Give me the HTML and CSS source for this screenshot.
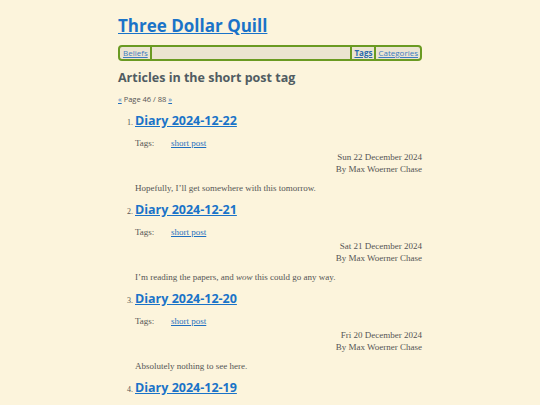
FILE: index.html
```html
<!DOCTYPE html>
<html>
<head>
<meta charset="utf-8">
<link rel="stylesheet" href="styles.css">
</head>
<body>
<div class="page">
  <h1 class="site-title"><a href="#">Three Dollar Quill</a></h1>
  <nav class="nav">
    <a class="nav-item" href="#">Beliefs</a>
    <span class="nav-fill"></span>
    <a class="nav-item nav-current" href="#">Tags</a>
    <a class="nav-item" href="#">Categories</a>
  </nav>
  <h2 class="heading">Articles in the short post tag</h2>
  <p class="pager"><a href="#">«</a> Page 46 / 88 <a href="#">»</a></p>
  <ol class="articles" start="1">
    <li class="article">
      <h3 class="article-title"><a href="#">Diary 2024-12-22</a></h3>
      <div class="tags"><span class="tags-label">Tags:</span><a href="#">short post</a></div>
      <div class="meta">Sun 22 December 2024<br>By Max Woerner Chase</div>
      <p class="summary">Hopefully, I’ll get somewhere with this tomorrow.</p>
    </li>
    <li class="article">
      <h3 class="article-title"><a href="#">Diary 2024-12-21</a></h3>
      <div class="tags"><span class="tags-label">Tags:</span><a href="#">short post</a></div>
      <div class="meta">Sat 21 December 2024<br>By Max Woerner Chase</div>
      <p class="summary">I’m reading the papers, and <em>wow</em> this could go any way.</p>
    </li>
    <li class="article">
      <h3 class="article-title"><a href="#">Diary 2024-12-20</a></h3>
      <div class="tags"><span class="tags-label">Tags:</span><a href="#">short post</a></div>
      <div class="meta">Fri 20 December 2024<br>By Max Woerner Chase</div>
      <p class="summary">Absolutely nothing to see here.</p>
    </li>
    <li class="article">
      <h3 class="article-title"><a href="#">Diary 2024-12-19</a></h3>
    </li>
  </ol>
</div>
</body>
</html>
```
FILE: styles.css
```css
html, body {
  margin: 0;
  padding: 0;
  background: #fcf4dc;
}
body {
  font-family: "Liberation Serif", serif;
  color: #555555;
  font-size: 9px;
}
.page {
  width: 304px;
  margin: 0 auto;
  padding-top: 14px;
}
a {
  color: #1f6fbf;
}
.site-title {
  font-family: "Open Sans", sans-serif;
  font-size: 17px;
  font-weight: 700;
  margin: 0 0 7px 0;
  line-height: 24px;
}
.site-title a {
  color: #1a73c8;
}
.nav {
  display: flex;
  align-items: stretch;
  height: 12px;
  border: 2px solid #6a9a22;
  border-radius: 4px;
  background: #ebe4d1;
  font-family: "Open Sans", sans-serif;
  font-size: 8px;
  line-height: 12px;
}
.nav-item {
  padding: 0 2px;
  color: #3d7bc0;
  border-right: 2px solid #6a9a22;
}
.nav-item:first-child {
  padding-left: 3px;
}
.nav-item:last-child {
  border-right: none;
}
.nav-fill {
  flex: 1;
  border-right: 2px solid #6a9a22;
}
.nav-current {
  font-weight: 700;
  color: #2a69ad;
}
.heading {
  font-family: "Open Sans", sans-serif;
  font-size: 12.5px;
  font-weight: 700;
  color: #505c62;
  margin: 8px 0 0 0;
  line-height: 18px;
}
.pager {
  font-family: "Open Sans", sans-serif;
  font-size: 7.5px;
  color: #555;
  margin: 7px 0 0 0;
  line-height: 10px;
}
.articles {
  margin: 8px 0 0 0;
  padding-left: 17px;
  font-family: "Liberation Serif", serif;
  font-size: 8px;
}
.article-title {
  font-family: "Open Sans", sans-serif;
  font-size: 12.5px;
  font-weight: 700;
  margin: 0;
  line-height: 18px;
}
.article-title a {
  color: #1a73c8;
}
.tags {
  font-size: 9px;
  margin-top: 8px;
  line-height: 11px;
}
.tags-label {
  display: inline-block;
  width: 36px;
}
.meta {
  font-size: 9px;
  text-align: right;
  line-height: 12px;
  margin-top: 2px;
}
.summary {
  font-size: 9px;
  margin: 8px 0 7px 0;
  line-height: 11px;
}
```
